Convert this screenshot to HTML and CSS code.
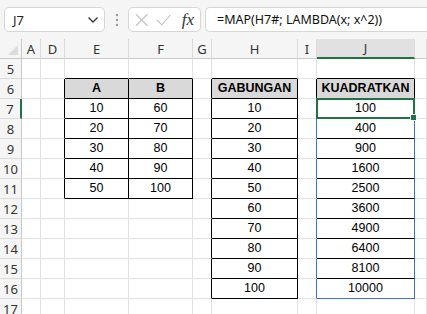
FILE: index.html
```html
<!DOCTYPE html>
<html lang="id">
<head>
  <meta charset="UTF-8">
  <meta name="viewport" content="width=device-width, initial-scale=1.0">
  <title>MAP LAMBDA</title>
  <link rel="stylesheet" href="styles.css">
</head>
<body>
  <header class="formula-bar">
    <div class="name-box">
      <span>J7</span>
      <svg class="chevron" width="12" height="8" viewBox="0 0 12 8"><path d="M1.5 1.5 L6 6 L10.5 1.5" fill="none" stroke="#333" stroke-width="1.3"/></svg>
    </div>
    <svg class="dots" width="4" height="14" viewBox="0 0 4 14"><circle cx="2" cy="2" r="1.2" fill="#999"/><circle cx="2" cy="7" r="1.2" fill="#999"/><circle cx="2" cy="12" r="1.2" fill="#999"/></svg>
    <div class="fx-buttons">
      <svg width="14" height="14" viewBox="0 0 14 14"><path d="M1 1 L13 13 M13 1 L1 13" stroke="#c4c4c4" stroke-width="1.2"/></svg>
      <svg width="16" height="14" viewBox="0 0 16 14"><path d="M1 7 L6 12 L15 2" fill="none" stroke="#c4c4c4" stroke-width="1.2"/></svg>
      <span class="fx">fx</span>
    </div>
    <div class="formula">=MAP(H7#; LAMBDA(x; x^2))</div>
  </header>

  <main class="sheet" id="sheet"></main>

  <script>
    const cols = ["A", "D", "E", "F", "G", "H", "I", "J", "K"];
    const cells = {
      "E6": "A", "F6": "B", "H6": "GABUNGAN", "J6": "KUADRATKAN"
    };
    for (let i = 1; i <= 5; i++) {
      cells["E" + (6 + i)] = String(i * 10);
      cells["F" + (6 + i)] = String(50 + i * 10);
    }
    for (let i = 1; i <= 10; i++) {
      cells["H" + (6 + i)] = String(i * 10);
      cells["J" + (6 + i)] = String(i * 10 * i * 10);
    }
    const heads = ["E6", "F6", "H6", "J6"];
    const inTable = (c, r) => (c + r) in cells;
    const spill = (c, r) => c === "J" && r >= 7 && r <= 16;

    const sheet = document.getElementById("sheet");
    const add = (cls, text) => {
      const d = document.createElement("div");
      d.className = cls;
      d.textContent = text || "";
      sheet.appendChild(d);
      return d;
    };

    add("corner");
    cols.forEach(c => add("col-head" + (c === "J" ? " active" : ""), c === "K" ? "" : c));

    for (let r = 5; r <= 17; r++) {
      add("row-head" + (r === 7 ? " active" : ""), r);
      cols.forEach((c, i) => {
        const next = cols[i + 1];
        let cls = "cell";
        if (heads.includes(c + r)) cls += " hdr";
        if (inTable(c, r) || (next && inTable(next, r))) cls += " edge-r";
        if (spill(c, r) || (next && spill(next, r))) cls += " spill-r";
        if (inTable(c, r) || inTable(c, r + 1)) cls += " edge-b";
        if (c === "J" && r === 16) cls += " spill-b";
        if (c === "J" && r === 7) cls += " selected";
        add(cls, cells[c + r]);
      });
    }
  </script>
</body>
</html>
```

FILE: styles.css
```css
body { margin: 0; background: #f5f5f5; font-family: "Liberation Sans", Arial, sans-serif; overflow: hidden; }
.formula-bar { display: flex; align-items: center; height: 39px; padding: 0 0 0 4px; gap: 0; }
.name-box { display: flex; align-items: center; justify-content: space-between; box-sizing: border-box; width: 101px; height: 25px; padding: 0 5px 0 8px; background: #fff; border: 1px solid #d6d6d6; border-radius: 5px; font: 13px "Noto Sans", sans-serif; color: #222; }
.dots { margin: 0 9px 0 10px; }
.fx-buttons { display: flex; align-items: center; gap: 8px; box-sizing: border-box; width: 73px; height: 25px; padding: 0 6px 0 6px; background: #fff; border: 1px solid #d6d6d6; border-radius: 5px; }
.fx { font: italic 17px "Liberation Serif", serif; color: #333; margin-left: 2px; }
.formula { flex: 1; box-sizing: border-box; height: 25px; margin-left: 4px; padding: 0 0 0 11px; background: #fff; border: 1px solid #d6d6d6; border-right: none; border-radius: 5px 0 0 5px; font: 12.5px "Noto Sans", sans-serif; line-height: 23px; color: #111; }

.sheet { display: grid; grid-template-columns: 22px 19px 24px 64px 64px 19px 86px 19px 98px 1fr; grid-auto-rows: 20px; }
.corner, .col-head, .row-head { box-sizing: border-box; background: #f5f5f5; font: 13px "Noto Sans", sans-serif; color: #333; display: flex; align-items: center; justify-content: center; }
.corner { border-right: 1px solid #c8c8c8; border-bottom: 1px solid #c8c8c8; position: relative; }
.corner::after { content: ""; position: absolute; right: 3px; bottom: 3px; border-style: solid; border-width: 0 0 10px 10px; border-color: transparent transparent #dcdcdc transparent; }
.col-head { border-right: 1px solid #dadada; border-bottom: 1px solid #c8c8c8; }
.col-head.active { background: #e1e1e1; border-bottom: 2px solid #217346; }
.row-head { border-right: 1px solid #c8c8c8; border-bottom: 1px solid #dadada; }
.row-head.active { border-right: 2px solid #217346; }
.cell { box-sizing: border-box; background: #fff; border-right: 1px solid #e1e1e1; border-bottom: 1px solid #e1e1e1; font-size: 12.5px; line-height: 19px; text-align: center; color: #000; }
.cell.hdr { background: #d9d9d9; font-weight: bold; }
.cell.edge-r { border-right-color: #000; }
.cell.edge-b { border-bottom-color: #000; }
.cell.spill-r { border-right-color: #3f74d0; }
.cell.spill-b { border-bottom-color: #3f74d0; }
.cell.selected { position: relative; }
.cell.selected::after { content: ""; position: absolute; left: -1px; top: -1px; right: -1px; bottom: -1px; border: 2px solid #217346; }
.cell.selected::before { content: ""; position: absolute; right: -3px; bottom: -3px; width: 5px; height: 5px; background: #217346; border: 1px solid #fff; z-index: 1; }
```
